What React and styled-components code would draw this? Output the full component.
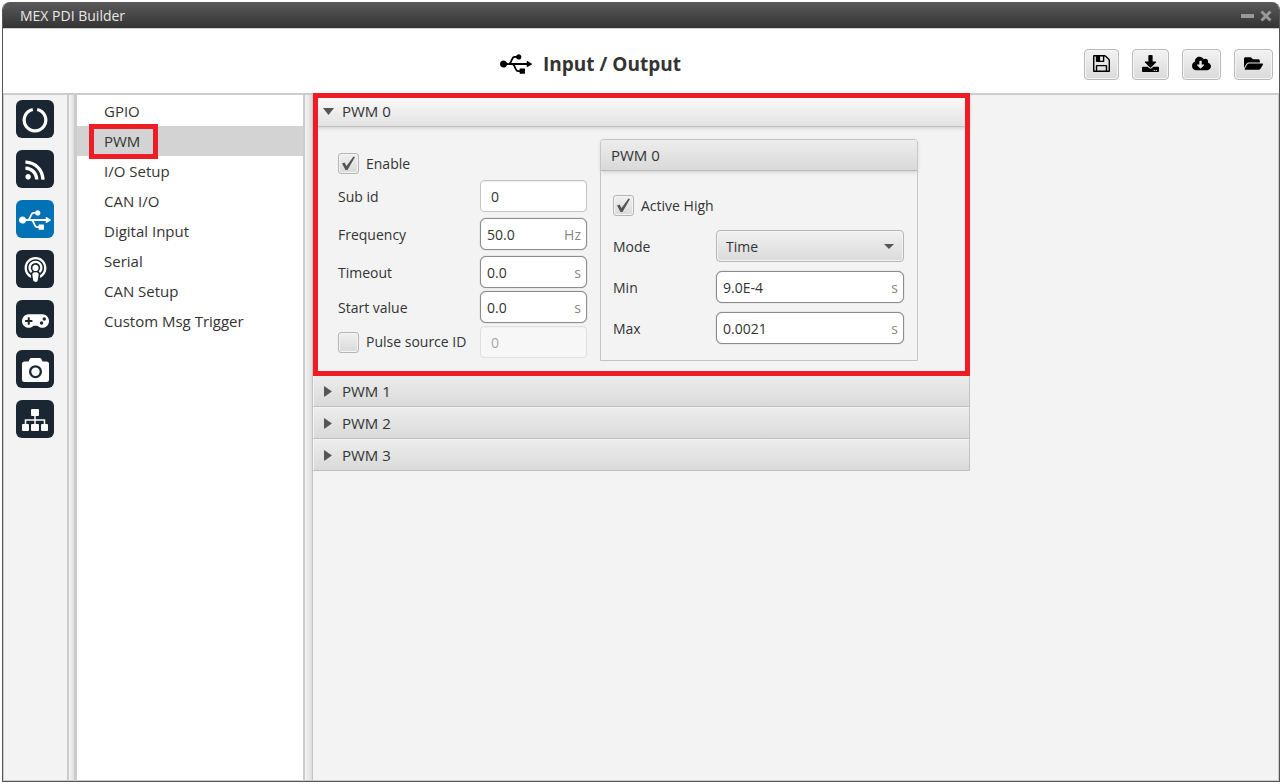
import React, { useState } from 'react'
import styled, { createGlobalStyle } from 'styled-components'
import {
  FaCloudDownloadAlt,
  FaDownload,
  FaFolderOpen,
  FaGamepad,
  FaPodcast,
  FaRss,
  FaUsb
} from 'react-icons/fa'

const GlobalStyle = createGlobalStyle`
  * {
    box-sizing: border-box;
  }
  body {
    margin: 0;
    background: #fff;
    color: #333;
    font-family: "Open Sans", "Noto Sans", sans-serif;
    font-size: 14px;
    line-height: 20px;
  }
  button, input, select {
    margin: 0;
    font: inherit;
    color: inherit;
  }
`

const Page = styled.div`
  display: flex;
  min-height: 100vh;
  padding: 2px 3px 2px 2px;
`

const Window = styled.div`
  flex: 1;
  display: flex;
  flex-direction: column;
  border: 1px solid #555;
  border-top: 0;
  border-radius: 8px 8px 0 0;
  overflow: hidden;
`

const TitleBar = styled.div`
  display: flex;
  align-items: center;
  height: 26px;
  padding: 2px 7px 0 17px;
  background: linear-gradient(#5a5a5a, #333);
  color: #e8e8e8;
`

const WindowName = styled.div`
  flex: 1;
`

const WindowButton = styled.button`
  display: flex;
  padding: 0;
  margin-left: 6px;
  border: 0;
  background: none;
  color: #999;
`

const Header = styled.header`
  display: flex;
  align-items: center;
  height: 65px;
  padding: 6px 6px 0 0;
  border-top: 1px solid #ccc;
  background: #fff;
`

const Heading = styled.h1`
  flex: 1;
  display: flex;
  align-items: center;
  justify-content: center;
  gap: 11px;
  margin: 0;
  padding-left: 94px;
  font-size: 19px;
  line-height: 26px;
  font-weight: 700;

  svg {
    color: #000;
  }
`

const Tools = styled.div`
  display: flex;
  gap: 13px;
`

const ToolButton = styled.button`
  display: flex;
  align-items: center;
  height: 31px;
  padding: 0 ${props => props.$tight ? '8px' : '9px'} 2px;
  border: 1px solid #b9b9b9;
  border-radius: 4px;
  background: linear-gradient(#f2f2f2, #dadada);
  box-shadow: inset 0 0 0 1px #f6f6f6;
  color: #000;
`

const Body = styled.div`
  flex: 1;
  display: flex;
  border: 1px solid #ccc;
  border-top: 2px solid #ccc;
  background: #f3f3f3;
`

const Sidebar = styled.nav`
  display: flex;
  flex-direction: column;
  gap: 12px;
  width: 63px;
  padding: 5px 0 0 12px;
`

const SideButton = styled.button`
  display: flex;
  align-items: center;
  justify-content: center;
  width: 38px;
  height: 38px;
  padding: 1px 0 0;
  border: 0;
  border-radius: 6px;
  background: ${props => props.$active ? '#0072b5' : '#1a2733'};
  color: #fff;
`

const Splitter = styled.div`
  width: ${props => props.$wide ? '10px' : '7px'};
  border-left: 2px solid #ccc;
  border-right: ${props => props.$wide ? '1px solid #c4c4c4' : '0'};
  background: linear-gradient(to right, #f5f5f5, #dedede);
`

const List = styled.ul`
  width: 229px;
  margin: 0;
  padding: 1px 0 0;
  list-style: none;
  border-left: 3px solid #ccc;
  background: #fff;
`

const ListItem = styled.li`
  position: relative;
`

const ListButton = styled.button`
  display: block;
  width: 100%;
  height: 30px;
  padding: 0 0 0 27px;
  border: 0;
  background: ${props => props.$active ? '#d3d3d3' : '#fff'};
  font-size: 15px;
  text-align: left;
`

const Callout = styled.div`
  position: absolute;
  inset: ${props => props.$inset};
  z-index: 1;
  border: 5px solid #ee1c25;
  pointer-events: none;
`

const Content = styled.main`
  flex: 1;
  min-width: 0;
`

const Accordion = styled.div`
  max-width: 657px;
  border-right: 1px solid #c2c2c2;
`

const Section = styled.section`
  position: relative;
`

const SectionHeader = styled.button`
  display: flex;
  align-items: center;
  gap: 6px;
  width: 100%;
  height: 32px;
  padding: 1px 0 0 10px;
  border: 0;
  border-bottom: 1px solid #bfbfbf;
  background: ${props => props.$open
    ? 'linear-gradient(#fcfcfc, #e2e2e2)'
    : 'linear-gradient(#ededed, #dadada)'};
  box-shadow: ${props => props.$open ? '0 1px 4px #ccc' : 'inset 1px 1px 0 #f4f4f4'};
  font-size: 15px;
  text-align: left;
`

const SectionBody = styled.div`
  display: flex;
  align-items: flex-start;
  gap: 13px;
  padding: 12px 0 14px 25px;
`

const Column = styled.div`
  display: flex;
  flex-direction: column;
  gap: 6px;
  padding-top: 14px;
`

const Rows = styled.div`
  display: flex;
  flex-direction: column;
  gap: ${props => props.$gap};
`

const TightRows = styled(Rows)`
  margin-top: -3px;
`

const Row = styled.div`
  display: grid;
  grid-template-columns: ${props => props.$columns};
  align-items: center;
`

const FieldLabel = styled.label`
  padding-top: 2px;
`

const Check = styled.label`
  position: relative;
  display: flex;
  align-items: center;
  gap: 7px;

  input {
    appearance: none;
    width: 21px;
    height: 21px;
    border: 1px solid #b5b5b5;
    border-radius: 3px;
    background: linear-gradient(#f0f0f0, #dadada);
    box-shadow: inset 0 0 0 1px #f4f4f4;
  }
  svg {
    position: absolute;
    left: 3px;
    top: 2px;
    pointer-events: none;
    visibility: hidden;
  }
  input:checked + svg {
    visibility: visible;
  }
`

const Field = styled.div`
  display: flex;
  align-items: center;
  height: 32px;
  padding: ${props => props.$unit ? '1px 5px 0 6px' : '1px 5px 0 10px'};
  border: 1px solid ${props => props.$unit ? '#8c8c8c' : '#c4c4c4'};
  border-radius: ${props => props.$unit ? '6px' : '4px'};
  background: #fff;
  box-shadow: ${props => props.$unit ? '0 0 1px #888' : 'inset 0 1px 1px #eee'};
  opacity: ${props => props.$disabled ? '0.4' : '1'};

  input {
    flex: 1;
    min-width: 0;
    width: 100%;
    padding: 0;
    border: 0;
    outline: 0;
    background: none;
  }
`

const Unit = styled.span`
  color: #888;
`

const Panel = styled.div`
  width: 318px;
  border: 1px solid #c4c4c4;
  border-radius: 4px 4px 0 0;
`

const PanelTitle = styled.h2`
  margin: 0;
  padding: 5px 10px;
  border-bottom: 1px solid #b9b9b9;
  border-radius: 3px 3px 0 0;
  background: linear-gradient(#ededed, #d9d9d9);
  box-shadow: 0 1px 4px #ccc;
  font-size: 15px;
  font-weight: 400;
`

const PanelBody = styled.div`
  display: flex;
  flex-direction: column;
  gap: 14px;
  padding: 24px 13px 16px 12px;
`

const SelectBox = styled.div`
  position: relative;

  select {
    appearance: none;
    display: block;
    width: 100%;
    height: 32px;
    padding: 1px 28px 0 9px;
    border: 1px solid #b5b5b5;
    border-radius: 4px;
    background: linear-gradient(#f0f0f0, #dadada);
    box-shadow: inset 0 0 0 1px #f4f4f4;
  }
  svg {
    position: absolute;
    right: 10px;
    top: 14px;
    pointer-events: none;
  }
`

const SaveIcon = () => (
  <svg width="17" height="17" viewBox="0 128 1536 1536" fill="currentColor" aria-hidden="true">
    <path d="M384 1536h768v-384h-768v384zM1280 1536h128v-896q0-14-10-38.500t-20-34.500l-281-281q-10-10-34-20t-39-10v416q0 40-28 68t-68 28h-576q-40 0-68-28t-28-68v-416h-128v1280h128v-416q0-40 28-68t68-28h832q40 0 68 28t28 68v416zM896 608v-320q0-13-9.500-22.500t-22.500-9.500h-192q-13 0-22.500 9.500t-9.500 22.500v320q0 13 9.500 22.500t22.500 9.500h192q13 0 22.500-9.500t9.500-22.500zM1536 640v928q0 40-28 68t-68 28h-1344q-40 0-68-28t-28-68v-1344q0-40 28-68t68-28h928q40 0 88 20t76 48l280 280q28 28 48 76t20 88z" />
  </svg>
)

const RingIcon = () => (
  <svg width="26" height="26" viewBox="0 0 26 26" fill="none" stroke="currentColor" strokeWidth="3.200" aria-hidden="true">
    <path d="M15.200 2.500A10.800 10.800 0 1 1 10.800 2.500" />
  </svg>
)

const CameraIcon = () => (
  <svg width="27" height="24" viewBox="0 0 27 24" fill="currentColor" aria-hidden="true">
    <path
      fillRule="evenodd"
      d="M2.500 3.500H6.500L7.500 1.200Q8 0 9.300 0H17.700Q19 0 19.500 1.200L20.500 3.500H24.500Q27 3.500 27 6V21.500Q27 24 24.500 24H2.500Q0 24 0 21.500V6Q0 3.500 2.500 3.500ZM13.500 7.200a6.500 6.500 0 1 0 0 13a6.500 6.500 0 1 0 0-13Z"
    />
    <circle cx="13.500" cy="13.700" r="4.200" />
  </svg>
)

const TreeIcon = () => (
  <svg width="26" height="22" viewBox="0 0 26 22" fill="currentColor" aria-hidden="true">
    <rect x="9" y="0" width="8" height="7" rx="1" />
    <rect x="0" y="15" width="7" height="7" rx="1" />
    <rect x="9" y="15" width="8" height="7" rx="1" />
    <rect x="19" y="15" width="7" height="7" rx="1" />
    <path d="M13 7V15M3.500 15V11H22.500V15" fill="none" stroke="currentColor" strokeWidth="1.500" />
  </svg>
)

const Tick = () => (
  <svg width="15" height="16" viewBox="0 0 15 16" fill="#555" aria-hidden="true">
    <path d="M1 8.500 L3.500 7.500 L5.500 11 L12.500 1.500 L14 2 L6.500 15 L4.500 15 Z" />
  </svg>
)

const Arrow = ({ open }) => (
  <svg width="13" height="13" viewBox="0 0 13 13" fill="#555" aria-hidden="true">
    <path d={open ? 'M0 3h11l-5.500 7z' : 'M1 1v11l8-5.500z'} />
  </svg>
)

const sideItems = [
  { name: 'Setup', icon: <RingIcon /> },
  { name: 'Feed', icon: <FaRss size={22} /> },
  { name: 'Input / Output', icon: <FaUsb size={32} />, active: true },
  { name: 'Broadcast', icon: <FaPodcast size={25} /> },
  { name: 'Control', icon: <FaGamepad size={27} viewBox="0 -36 640 512" /> },
  { name: 'Camera', icon: <CameraIcon /> },
  { name: 'Network', icon: <TreeIcon /> }
]

const menu = ['GPIO', 'PWM', 'I/O Setup', 'CAN I/O', 'Digital Input', 'Serial', 'CAN Setup', 'Custom Msg Trigger']

const NumberRow = ({ id, label, value, unit, columns = '142px 107px' }) => (
  <Row $columns={columns}>
    <FieldLabel htmlFor={id}>{label}</FieldLabel>
    <Field $unit={!!unit}>
      <input id={id} defaultValue={value} />
      {unit && <Unit>{unit}</Unit>}
    </Field>
  </Row>
)

const CheckBox = ({ label, ...rest }) => (
  <Check>
    <input type="checkbox" {...rest} />
    <Tick />
    {label}
  </Check>
)

const PwmForm = () => {
  const [pulse, setPulse] = useState(false)
  const wide = '103px 1fr'

  return (
    <SectionBody>
      <Column>
        <CheckBox label="Enable" defaultChecked />
        <Rows $gap="6px">
          <NumberRow id="sub-id" label="Sub id" value="0" />
          <NumberRow id="frequency" label="Frequency" value="50.0" unit="Hz" />
          <NumberRow id="timeout" label="Timeout" value="0.0" unit="s" />
        </Rows>
        <TightRows $gap="3px">
          <NumberRow id="start-value" label="Start value" value="0.0" unit="s" />
          <Row $columns="142px 107px">
            <CheckBox label="Pulse source ID" checked={pulse} onChange={e => setPulse(e.target.checked)} />
            <Field $disabled={!pulse}>
              <input aria-label="Pulse source ID value" defaultValue="0" disabled={!pulse} />
            </Field>
          </Row>
        </TightRows>
      </Column>
      <Panel>
        <PanelTitle>PWM 0</PanelTitle>
        <PanelBody>
          <CheckBox label="Active High" defaultChecked />
          <Rows $gap="9px">
            <Row $columns={wide}>
              <FieldLabel htmlFor="mode">Mode</FieldLabel>
              <SelectBox>
                <select id="mode" defaultValue="Time">
                  <option>Time</option>
                  <option>Duty cycle</option>
                </select>
                <svg width="10" height="5" viewBox="0 0 10 5" fill="#555" aria-hidden="true">
                  <path d="M0 0h10l-5 5z" />
                </svg>
              </SelectBox>
            </Row>
            <NumberRow id="min" label="Min" value="9.0E-4" unit="s" columns={wide} />
            <NumberRow id="max" label="Max" value="0.0021" unit="s" columns={wide} />
          </Rows>
        </PanelBody>
      </Panel>
    </SectionBody>
  )
}

const App = () => {
  const [selected, setSelected] = useState('PWM')
  const [open, setOpen] = useState(0)

  return (
    <Page>
      <GlobalStyle />
      <Window>
        <TitleBar>
          <WindowName>MEX PDI Builder</WindowName>
          <WindowButton aria-label="Minimize">
            <svg width="13" height="12" viewBox="0 0 13 12" fill="currentColor"><path d="M0 4h13v4H0z" /></svg>
          </WindowButton>
          <WindowButton aria-label="Close">
            <svg width="12" height="12" viewBox="0 0 12 12" stroke="currentColor" strokeWidth="3">
              <path d="M1.500 1.500l9 9M10.500 1.500l-9 9" />
            </svg>
          </WindowButton>
        </TitleBar>
        <Header>
          <Heading><FaUsb size={32} />Input / Output</Heading>
          <Tools>
            <ToolButton aria-label="Save" $tight><SaveIcon /></ToolButton>
            <ToolButton aria-label="Download"><FaDownload size={17} /></ToolButton>
            <ToolButton aria-label="Download from cloud"><FaCloudDownloadAlt size={19} /></ToolButton>
            <ToolButton aria-label="Open"><FaFolderOpen size={19} /></ToolButton>
          </Tools>
        </Header>
        <Body>
          <Sidebar>
            {sideItems.map(({ name, icon, active }) => (
              <SideButton key={name} aria-label={name} $active={active}>{icon}</SideButton>
            ))}
          </Sidebar>
          <Splitter />
          <List>
            {menu.map(name => (
              <ListItem key={name}>
                <ListButton $active={name === selected} onClick={() => setSelected(name)}>{name}</ListButton>
                {name === 'PWM' && <Callout $inset="-2px 145px -3px 12px" />}
              </ListItem>
            ))}
          </List>
          <Splitter $wide />
          <Content>
            <Accordion>
              {[0, 1, 2, 3].map(n => (
                <Section key={n}>
                  <SectionHeader
                    $open={n === open}
                    aria-expanded={n === open}
                    onClick={() => setOpen(n === open ? -1 : n)}
                  >
                    <Arrow open={n === open} />
                    PWM {n}
                  </SectionHeader>
                  {n === open && <PwmForm />}
                  {n === 0 && open === 0 && <Callout $inset="-2px -1px -1px 0" />}
                </Section>
              ))}
            </Accordion>
          </Content>
        </Body>
      </Window>
    </Page>
  )
}

export default App
